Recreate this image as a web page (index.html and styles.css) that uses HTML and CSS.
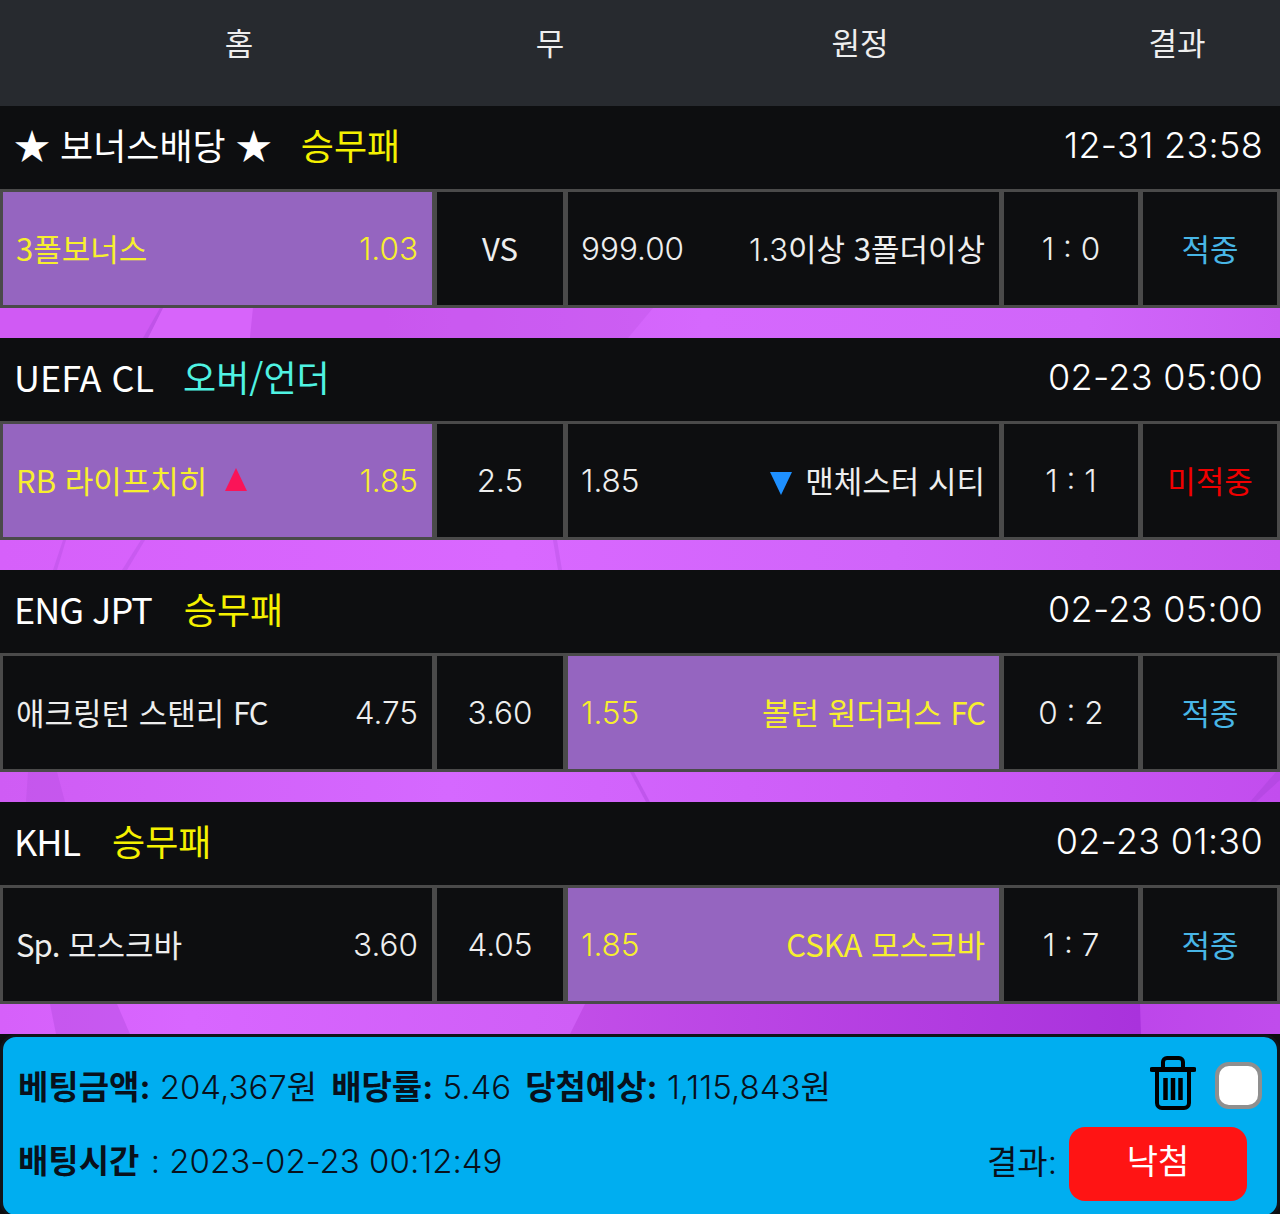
FILE: index.html
```html
<!DOCTYPE html>
<html lang="ko">
<head>
  <meta charset="UTF-8" />
  <meta name="viewport" content="width=device-width, initial-scale=1.0"/>
  <title>베팅내역</title>
  <link rel="stylesheet" href="styles.css">
</head>
<body>

  <div class="top-head">
    <div>홈</div>
    <div>무</div>
    <div>원정</div>
    <div>결과</div>
  </div>

  <!-- 보너스 -->
  <div class="game-head">
    <div class="league">★ 보너스배당 ★<span class="tag yellow">승무패</span></div>
    <div class="time num">12-31 23:58</div>
  </div>
  <div class="game-row">
    <div class="cell picked"><span>3폴보너스</span><span class="num">1.03</span></div>
    <div class="cell mid">VS</div>
    <div class="cell"><span class="num">999.00</span><span><span class="num">1.3</span>이상 3폴더이상</span></div>
    <div class="cell mid num">1 : 0</div>
    <div class="cell mid hit">적중</div>
  </div>
  <svg class="band band-1" viewBox="0 0 1280 30" preserveAspectRatio="none">
    <polygon points="163,0 253,0 250,30 148,30" fill="#dc6eff" opacity="0.55"/>
    <polygon points="253,0 653,0 628,30 250,30" fill="#b94ee0" opacity="0.3"/>
    <polygon points="160,0 163,0 148,30 143,30" fill="#a848d8" opacity="0.4"/>
  </svg>

  <!-- UEFA -->
  <div class="game-head">
    <div class="league">UEFA CL<span class="tag cyan">오버/언더</span></div>
    <div class="time num">02-23 05:00</div>
  </div>
  <div class="game-row">
    <div class="cell picked"><span>RB 라이프치히<i class="arrow up"></i></span><span class="num">1.85</span></div>
    <div class="cell mid num">2.5</div>
    <div class="cell"><span class="num">1.85</span><span><i class="arrow down"></i>맨체스터 시티</span></div>
    <div class="cell mid num">1 : 1</div>
    <div class="cell mid miss">미적중</div>
  </div>
  <svg class="band band-2" viewBox="0 0 1280 30" preserveAspectRatio="none">
    <polygon points="63,0 66,0 57,30 53,30" fill="#a848d8" opacity="0.3"/>
    <polygon points="141,0 145,0 127,30 122,30" fill="#a848d8" opacity="0.3"/>
    <polygon points="553,0 557,0 562,30 558,30" fill="#a848d8" opacity="0.3"/>
  </svg>

  <!-- ENG JPT -->
  <div class="game-head">
    <div class="league"><span class="tight">ENG JPT</span><span class="tag yellow">승무패</span></div>
    <div class="time num">02-23 05:00</div>
  </div>
  <div class="game-row">
    <div class="cell"><span>애크링턴 스탠리 <span class="tight">FC</span></span><span class="num">4.75</span></div>
    <div class="cell mid num">3.60</div>
    <div class="cell picked"><span class="num">1.55</span><span>볼턴 원더러스 <span class="tight">FC</span></span></div>
    <div class="cell mid num">0 : 2</div>
    <div class="cell mid hit">적중</div>
  </div>
  <svg class="band band-3" viewBox="0 0 1280 30" preserveAspectRatio="none">
    <polygon points="28,0 57,0 65,30 26,30" fill="#b048dc" opacity="0.3"/>
    <polygon points="630,0 634,0 650,30 646,30" fill="#a03fd0" opacity="0.35"/>
    <polygon points="1276,0 1280,0 1280,8 1256,30 1250,30" fill="#a03fd0" opacity="0.35"/>
  </svg>

  <!-- KHL -->
  <div class="game-head">
    <div class="league"><span class="tight">KHL</span><span class="tag yellow">승무패</span></div>
    <div class="time num">02-23 01:30</div>
  </div>
  <div class="game-row">
    <div class="cell"><span><span class="tight">Sp.</span> 모스크바</span><span class="num">3.60</span></div>
    <div class="cell mid num">4.05</div>
    <div class="cell picked"><span class="num">1.85</span><span>CSKA 모스크바</span></div>
    <div class="cell mid num">1 : 7</div>
    <div class="cell mid hit">적중</div>
  </div>
  <svg class="band band-4" viewBox="0 0 1280 30" preserveAspectRatio="none">
    <defs>
      <linearGradient id="band-dark" gradientUnits="userSpaceOnUse" x1="570" y1="0" x2="1140" y2="0">
        <stop offset="0" stop-color="#c24ee8"/>
        <stop offset="1" stop-color="#a932dc"/>
      </linearGradient>
    </defs>
    <polygon points="50,0 117,0 130,30 56,30" fill="#b048dc" opacity="0.4"/>
    <polygon points="585,0 1140,0 1141,30 570,30" fill="url(#band-dark)"/>
  </svg>

  <div class="summary">
    <div class="summary-row">
      <div class="info">
        <b>베팅금액<span class="num">:</span></b> <span class="num">204,367</span>원<b class="next">배당률<span class="num">:</span></b> <span class="num">5.46</span><b class="next">당첨예상<span class="num">:</span></b> <span class="num">1,115,843</span>원
      </div>
      <div class="tools">
        <svg class="trash" viewBox="0 0 46 54" fill="none" stroke="#000" stroke-width="4">
          <path d="M13 11V6a4 4 0 0 1 4-4h12a4 4 0 0 1 4 4v5"/>
          <path d="M2 13.500h42" stroke-width="5" stroke-linecap="round"/>
          <path d="M7 14v33a5 5 0 0 0 5 5h22a5 5 0 0 0 5-5V14"/>
          <path d="M15.500 22v22M23 22v22M30.500 22v22" stroke-width="4.500"/>
        </svg>
        <div class="check"></div>
      </div>
    </div>
    <div class="summary-row second">
      <div class="info"><b>배팅시간</b> <span class="num when">: 2023-02-23 00:12:49</span></div>
      <div class="result">
        <span class="result-label">결과<span class="num">:</span></span>
        <div class="result-btn">낙첨</div>
      </div>
    </div>
  </div>

</body>
</html>
```

FILE: styles.css
```css
html, body {
  margin: 0;
  height: 1214px;
  overflow: hidden;
}

body {
  font-family: "Noto Sans CJK KR", "Noto Sans", sans-serif;
  background-color: #0d0e10;
  color: white;
}

.num {
  font-family: "Inter", "Noto Sans", sans-serif;
  font-weight: 300;
}

b .num {
  font-weight: 700;
}

.tight {
  letter-spacing: -1px;
}

.top-head {
  display: grid;
  grid-template-columns: 478px 144px 476px 158px;
  height: 106px;
  background-color: #272a2f;
  font-size: 31px;
  line-height: 84px;
  text-align: center;
  color: #eee;
}

.game-head {
  display: flex;
  justify-content: space-between;
  align-items: center;
  box-sizing: border-box;
  height: 83px;
  padding: 0 17px 8px 14px;
  font-size: 36px;
  background-color: #0d0e10;
}

.tag {
  margin-left: 29px;
}

.league .tight {
  margin-right: 3px;
}

.time {
  margin-top: 3px;
  font-size: 36px;
  letter-spacing: 0.3px;
}

.yellow {
  color: #f5f100;
}

.cyan {
  color: #4ff2e2;
}

.game-row {
  display: grid;
  grid-template-columns: 429px 126px 431px 134px 134px;
  gap: 5px;
  height: 113px;
  padding: 3px;
  background-color: #4a4a4a;
}

.cell {
  display: flex;
  justify-content: space-between;
  align-items: center;
  padding: 0 14px 3px 13px;
  font-size: 31px;
  background-color: #0d0e10;
  color: #eee;
}

.cell > .num, .cell.num {
  font-size: 31.500px;
}

.cell > .num {
  margin-top: 3px;
}

.cell.mid {
  justify-content: center;
  padding: 0 0 3px;
}

.cell.mid.num {
  padding: 0;
}

.cell.picked {
  background-color: #9565c0;
  color: #f7ef2e;
}

.cell.hit {
  color: #48b6e6;
}

.cell.miss {
  color: #f00000;
}

.arrow {
  display: inline-block;
  width: 0;
  height: 0;
  border-left: 11px solid transparent;
  border-right: 11px solid transparent;
  vertical-align: 2px;
}

.arrow.up {
  margin-left: 18px;
  border-bottom: 23px solid #fa1458;
}

.arrow.down {
  margin-right: 13px;
  border-top: 23px solid #1e90ff;
  vertical-align: -2px;
}

.band {
  display: block;
  width: 100%;
  height: 30px;
}

.band-1 {
  background: linear-gradient(90deg, #d05af4, #d05af4 30%, #d568fd 55%, #d066fa 85%, #c95cf2);
}

.band-2 {
  background: linear-gradient(90deg, #d660fa, #d968ff 40%, #d064fa 70%, #c858f0);
}

.band-3 {
  background: linear-gradient(90deg, #cf5cf4, #d568ff 35%, #cc5cf6 70%, #c24dee);
}

.band-4 {
  background: linear-gradient(90deg, #d660fa, #d866ff 15%, #cf5ef6 45%, #bd46ea 89%, #c04cec);
}

.summary {
  box-sizing: border-box;
  height: 184px;
  padding: 12px 14px 0 15px;
  background-color: #00aef0;
  border: 3px solid #10141a;
  border-radius: 16px;
  color: #08111c;
  font-size: 33px;
}

.summary-row {
  display: flex;
  justify-content: space-between;
  align-items: center;
  height: 72px;
}

.summary-row.second {
  height: 78px;
}

.summary-row.second .info {
  margin-bottom: 2px;
}

.when {
  margin-left: 2px;
}

.next {
  margin-left: 14px;
}

.tools {
  display: flex;
  align-items: center;
  gap: 19px;
  margin-right: 1px;
}

.trash {
  width: 46px;
  height: 54px;
  margin-bottom: 4px;
}

.check {
  box-sizing: border-box;
  width: 47px;
  height: 47px;
  background-color: white;
  border: 4px solid #8f8f8f;
  border-radius: 14px;
}

.result {
  display: flex;
  align-items: center;
  gap: 12px;
  margin-top: 7px;
  margin-right: 16px;
}

.result-label {
  margin-bottom: 7px;
}

.result-btn {
  width: 178px;
  height: 74px;
  line-height: 65px;
  text-align: center;
  font-size: 34px;
  background-color: #ff1414;
  border-radius: 16px;
  color: white;
}
```
